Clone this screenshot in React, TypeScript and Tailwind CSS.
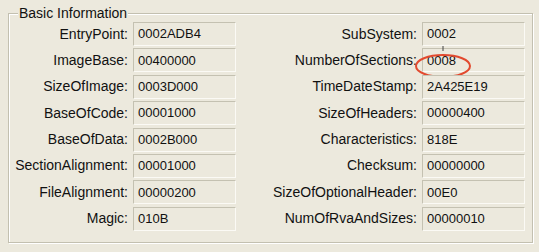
import React from "react";

const left: [string, string][] = [
  ["EntryPoint:", "0002ADB4"],
  ["ImageBase:", "00400000"],
  ["SizeOfImage:", "0003D000"],
  ["BaseOfCode:", "00001000"],
  ["BaseOfData:", "0002B000"],
  ["SectionAlignment:", "00001000"],
  ["FileAlignment:", "00000200"],
  ["Magic:", "010B"],
];

const right: [string, string][] = [
  ["SubSystem:", "0002"],
  ["NumberOfSections:", "0008"],
  ["TimeDateStamp:", "2A425E19"],
  ["SizeOfHeaders:", "00000400"],
  ["Characteristics:", "818E"],
  ["Checksum:", "00000000"],
  ["SizeOfOptionalHeader:", "00E0"],
  ["NumOfRvaAndSizes:", "00000010"],
];

function Box({ value, mark }: { value: string; mark?: boolean }) {
  return (
    <div className="relative h-[24px] border border-t-[#c4c1b1] border-l-[#c4c1b1] border-r-[#fbfaf5] border-b-[#fbfaf5] bg-[#ece9dd] flex items-center pl-[4px] text-[13px] text-[#111]">
      {value}
      {mark && (
        <svg
          className="absolute left-[-9px] top-[5px] overflow-visible"
          width="60"
          height="28"
          viewBox="0 0 60 28"
        >
          <ellipse cx="29" cy="12" rx="27" ry="11" fill="none" stroke="#e24a2f" strokeWidth="2" />
          <line x1="29" y1="-8" x2="29" y2="-3" stroke="#444" strokeWidth="1" />
        </svg>
      )}
    </div>
  );
}

export default function App() {
  const rows = left.map((l, i) => [l, right[i]] as const);
  return (
    <div
      className="w-[539px] h-[252px] bg-[#ece9dd] pt-[13px] pl-[8px] text-black"
      style={{ fontFamily: '"Liberation Sans", Arial, sans-serif' }}
    >
      <div className="relative w-[525px] h-[230px] border border-[#c3c0b0] shadow-[1px_1px_0_#ffffff,inset_1px_1px_0_#ffffff]">
        <div className="absolute left-[9px] top-[-9px] bg-[#ece9dd] px-[1px] text-[14px] leading-[16px] text-[#111]">
          Basic Information
        </div>
        <div className="grid grid-cols-[124px_103px_186px_103px] gap-y-[2.4px] pt-[8px]">
          {rows.map(([l, r], i) => (
            <React.Fragment key={i}>
              <div className="h-[24px] flex items-center justify-end pr-[5px] text-[14px] whitespace-nowrap text-[#111]">
                {l[0]}
              </div>
              <Box value={l[1]} />
              <div className="h-[24px] flex items-center justify-end pr-[5px] text-[14px] whitespace-nowrap text-[#111]">
                {r[0]}
              </div>
              <Box value={r[1]} mark={i === 1} />
            </React.Fragment>
          ))}
        </div>
      </div>
    </div>
  );
}
